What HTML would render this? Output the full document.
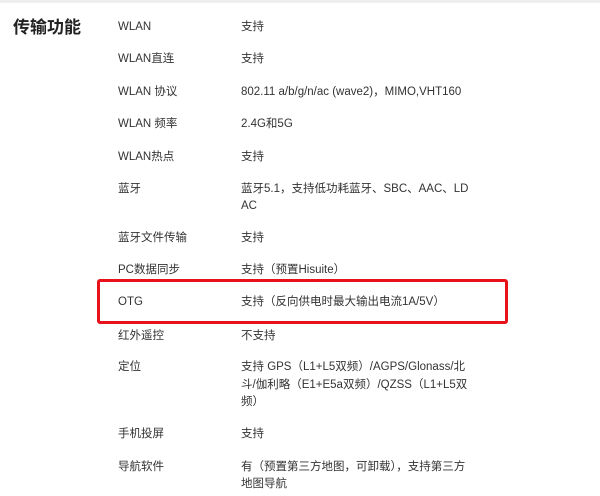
<!DOCTYPE html><html><head><meta charset="utf-8"><style>
body{margin:0;width:600px;height:496px;background:#fff;position:relative;overflow:hidden;font-family:"Liberation Sans","Noto Sans CJK SC",sans-serif;color:#333;font-size:11.5px}
.t{position:absolute;line-height:16px;white-space:nowrap}
.l{left:118px}.v{left:241px}
</style></head><body>
<div style="position:absolute;left:0;top:0;width:600px;height:3px;background:#eee"></div>
<div class="t" style="left:13px;top:17px;font-size:17px;font-weight:bold;line-height:22px;color:#222">传输功能</div>
<div class="t l" style="top:19px">WLAN</div><div class="t v" style="top:19px">支持</div>
<div class="t l" style="top:51px">WLAN直连</div><div class="t v" style="top:51px">支持</div>
<div class="t l" style="top:84px">WLAN 协议</div><div class="t v" style="top:84px">802.11 a/b/g/n/ac (wave2)，MIMO,VHT160</div>
<div class="t l" style="top:116px">WLAN 频率</div><div class="t v" style="top:116px">2.4G和5G</div>
<div class="t l" style="top:149px">WLAN热点</div><div class="t v" style="top:149px">支持</div>
<div class="t l" style="top:181px">蓝牙</div><div class="t v" style="top:181px">蓝牙5.1，支持低功耗蓝牙、SBC、AAC、LD</div><div class="t v" style="top:198px">AC</div>
<div class="t l" style="top:230px">蓝牙文件传输</div><div class="t v" style="top:230px">支持</div>
<div class="t l" style="top:262px">PC数据同步</div><div class="t v" style="top:262px">支持（预置Hisuite）</div>
<div class="t l" style="top:294px">OTG</div><div class="t v" style="top:294px">支持（反向供电时最大输出电流1A/5V）</div>
<div class="t l" style="top:328px">红外遥控</div><div class="t v" style="top:328px">不支持</div>
<div class="t l" style="top:359px">定位</div><div class="t v" style="top:359px">支持 GPS（L1+L5双频）/AGPS/Glonass/北</div><div class="t v" style="top:377px">斗/伽利略（E1+E5a双频）/QZSS（L1+L5双</div><div class="t v" style="top:394px">频）</div>
<div class="t l" style="top:426px">手机投屏</div><div class="t v" style="top:426px">支持</div>
<div class="t l" style="top:459px">导航软件</div><div class="t v" style="top:459px">有（预置第三方地图，可卸载），支持第三方</div><div class="t v" style="top:476px">地图导航</div>
<div style="position:absolute;left:97px;top:279px;width:405px;height:39px;border:3px solid #e8121b;border-radius:3px"></div>
</body></html>
